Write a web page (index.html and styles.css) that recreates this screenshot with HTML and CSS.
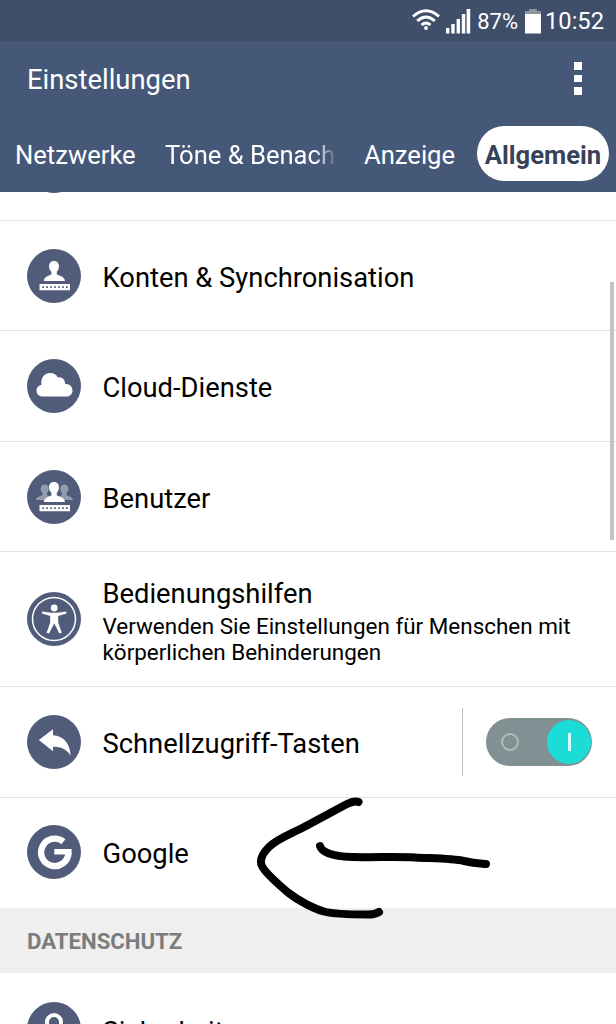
FILE: index.html
```html
<!DOCTYPE html>
<html lang="de">
<head>
  <meta charset="UTF-8" />
  <meta name="viewport" content="width=device-width, initial-scale=1.0" />
  <title>Einstellungen</title>
  <link rel="stylesheet" href="styles.css">
</head>
<body>
  <div class="status-bar">
    <svg class="wifi" viewBox="0 0 28 21" width="28" height="21">
      <g fill="none" stroke="#fff" stroke-width="3">
        <path d="M1 7.5Q14 -4 27 7.5" />
        <path d="M5.2 12Q14 4 22.8 12" />
        <path d="M9.5 16Q14 12 18.5 16" />
      </g>
      <circle cx="14" cy="19" r="1.9" fill="#fff" />
    </svg>
    <svg class="signal" viewBox="0 0 25 25" width="25" height="25">
      <path fill="#fff" d="M0 19h3.4v5.500h-3.400zM5.300 15h3.400v9.500h-3.400zM10.600 10h3.400v14.500h-3.400zM15.800 5h3.400v19.500h-3.400zM20.600 0h3.600v24.500h-3.600z" />
    </svg>
    <span class="percent">87%</span>
    <svg class="battery" viewBox="0 0 16 25" width="16" height="25">
      <path fill="#8d959f" d="M4 0h8v2h4v3H0V2h4z" />
      <path fill="#fff" d="M0 5h16v19.500H0z" />
    </svg>
    <span class="clock">10:52</span>
  </div>

  <div class="header">
    <div class="title-row">
      <h1>Einstellungen</h1>
      <div class="menu"><i></i><i></i><i></i></div>
    </div>
    <div class="tabs">
      <span class="tab tab-networks">Netzwerke</span>
      <span class="tab tab-sound">Töne &amp; Benach</span>
      <span class="tab tab-display">Anzeige</span>
      <span class="tab active">Allgemein</span>
    </div>
  </div>

  <div class="content">
    <div class="list">
      <div class="row upper">
        <div class="icon"></div>
      </div>
      <div class="row upper">
        <svg class="icon" viewBox="0 0 54 54">
          <path fill="#fff" d="M27 12c3.200 0 5 2.200 5 5.300 0 2.500-1 4.300-2.200 5.500v2.400c0 1 8 1.600 8.200 6.700H16.800c.2-5.100 7.600-5.700 7.600-6.700v-2.400c-1.300-1.200-2.400-3-2.400-5.500 0-3.100 1.800-5.300 5-5.300z" />
          <path fill="#fff" d="M12.500 35h30.500v6.200H12.500z" />
          <path stroke="#505c7a" stroke-width="1.700" stroke-dasharray="1.700 2.250" d="M15.300 38.200h26" />
        </svg>
        <span class="label">Konten &amp; Synchronisation</span>
      </div>
      <div class="row">
        <svg class="icon" viewBox="0 0 54 54">
          <path fill="#fff" d="M15.500 37.500c-3.400 0-6-2.500-6-5.800 0-3.200 2.300-5.300 5-5.700-1.200-6.500 2.800-12 8.500-12 4 0 6.500 1.800 7.800 4.400 4.200-1.200 7.400 2.200 7.400 6.600 4.200-.4 7.300 2.600 7.300 6.400 0 3.500-2.500 6.100-6 6.100z" />
        </svg>
        <span class="label">Cloud-Dienste</span>
      </div>
      <div class="row upper">
        <svg class="icon" viewBox="0 0 54 54">
          <g fill="#939bad">
            <path d="M17.700 14.500c2.500 0 4 1.700 4 4.300 0 2-.8 3.400-1.800 4.400v1.800c0 .8 6 1.500 6.300 5H9c.2-3.500 6.500-4.200 6.500-5v-1.800c-1-1-1.800-2.400-1.800-4.400 0-2.600 1.500-4.300 4-4.300z" />
            <path d="M37.300 14.500c2.500 0 4 1.700 4 4.300 0 2-.8 3.400-1.800 4.400v1.800c0 .8 6.300 1.500 6.500 5H28.600c.2-3.500 6.500-4.200 6.500-5v-1.800c-1-1-1.800-2.400-1.800-4.400 0-2.600 1.500-4.300 4-4.300z" />
          </g>
          <path fill="#fff" d="M27 12c3.200 0 5 2.200 5 5.300 0 2.500-1 4.300-2.200 5.500v2.400c0 1 8 1.600 8.200 6.700H16.800c.2-5.100 7.600-5.700 7.600-6.700v-2.400c-1.300-1.200-2.400-3-2.400-5.500 0-3.100 1.800-5.300 5-5.300z" />
          <path fill="#fff" d="M12.500 35h30.500v6.200H12.500z" />
          <path stroke="#505c7a" stroke-width="1.700" stroke-dasharray="1.700 2.250" d="M15.300 38.200h26" />
        </svg>
        <span class="label">Benutzer</span>
      </div>
      <div class="row tall">
        <svg class="icon" viewBox="0 0 54 54">
          <circle cx="27" cy="27" r="21.500" fill="none" stroke="#fff" stroke-width="1.500" />
          <circle cx="27.200" cy="16" r="3.400" fill="#fff" />
          <path fill="#fff" d="M15.300 19.600l8.700 1.200h6.500l8.700-1.200.3 1.900-8.300 2.500v6.500l3.600 10.200-2.400.9-5.200-10-5.200 10-2.400-.9 3.600-10.200V24l-8.200-2.500z" />
        </svg>
        <div class="text">
          <span class="label">Bedienungshilfen</span>
          <span class="summary">Verwenden Sie Einstellungen für Menschen mit<br>körperlichen Behinderungen</span>
        </div>
      </div>
      <div class="row">
        <svg class="icon" viewBox="0 0 54 54">
          <path fill="#fff" d="M11.800 25L26 14.300v5.900c10.500.8 17 8 17.600 20.200-4.200-6.200-9.200-8.700-17.600-8.700v4.500z" />
        </svg>
        <span class="label">Schnellzugriff-Tasten</span>
        <div class="switch-area">
          <div class="switch">
            <span class="off"></span>
            <span class="knob"></span>
          </div>
        </div>
      </div>
      <div class="row last">
        <svg class="icon" viewBox="0 0 54 54">
          <path fill="none" stroke="#fff" stroke-width="6.400" d="M36.400 16.700A13.700 13.700 0 1 0 41.500 28" />
          <path fill="#fff" d="M27.300 24h17.300v5.600H27.300z" />
        </svg>
        <span class="label">Google</span>
      </div>
      <div class="section">DATENSCHUTZ</div>
      <div class="row next">
        <svg class="icon" viewBox="0 0 54 54">
          <path fill="none" stroke="#fff" stroke-width="4" d="M20 26v-6a7 7 0 0 1 14 0v6" />
          <path fill="#fff" d="M16 25h22v16H16z" />
        </svg>
        <span class="label">Sicherheit</span>
      </div>
    </div>
    <div class="scrollbar"></div>
    <!-- hand drawn arrow pointing at the Google row -->
    <svg class="arrow" viewBox="0 0 270 145" width="270" height="145">
      <g fill="none" stroke="#000" stroke-width="8" stroke-linecap="round" stroke-linejoin="round">
        <path d="M118.500 17C115 15.500 111 17 106 19.500L66 41C49 50 38 53 29 62C22 69 19.500 76 22 81C25 88 38 99 48 107.500C60 117 75 124 84 126.500C95 129.500 115 129.500 128 129.500Q135 129.500 139 127" />
        <path d="M80 61C82 68 95 71.500 112 72C134 72.500 160 71.500 175 72.500C195 73.500 212 73.500 224 76C235 78.500 240 78.500 246 79" />
      </g>
    </svg>
  </div>
</body>
</html>
```
FILE: styles.css
```css
* {
  box-sizing: border-box;
}
body {
  margin: 0;
  height: 1024px;
  overflow: hidden;
  display: flex;
  flex-direction: column;
  font-family: Roboto, sans-serif;
  background-color: #fff;
  color: #000;
}
.status-bar {
  height: 41px;
  flex: none;
  display: flex;
  align-items: center;
  justify-content: flex-end;
  padding: 1px 12px 0 0;
  background-color: #3f4e69;
  color: #fff;
}
.wifi {
  margin-right: 6px;
  margin-top: -3px;
}
.signal {
  margin-right: 6px;
}
.percent {
  font-size: 22px;
  margin-right: 7px;
}
.battery {
  margin-right: 4px;
}
.clock {
  font-size: 23.700px;
}
.header {
  height: 151px;
  flex: none;
  background-color: #465877;
  color: #fff;
}
.title-row {
  height: 77px;
  display: flex;
  align-items: center;
  justify-content: space-between;
  padding: 0 34px 0 27px;
}
h1 {
  margin: 0;
  font-size: 27.400px;
  font-weight: 400;
}
.menu {
  display: flex;
  flex-direction: column;
  gap: 5px;
  margin-top: -2px;
}
.menu i {
  width: 8px;
  height: 7.5px;
  background-color: #fff;
}
.tabs {
  display: flex;
  align-items: center;
  padding: 8px 7px 0 15px;
  font-size: 25.600px;
  line-height: 32px;
  white-space: nowrap;
}
.tab {
  padding-top: 2px;
}
.tab-networks {
  width: 150px;
}
.tab-sound {
  width: 170px;
  margin-right: 29px;
  -webkit-mask-image: linear-gradient(to right, #000 150px, transparent 172px);
  mask-image: linear-gradient(to right, #000 150px, transparent 172px);
}
.tab-display {
  width: 113px;
}
.active {
  width: 132px;
  height: 55px;
  border-radius: 28px;
  line-height: 55px;
  text-align: center;
  background-color: #fff;
  color: #374258;
  font-weight: 700;
}
.content {
  flex: 1;
  position: relative;
  overflow: hidden;
}
/* list is scrolled, the first row is almost out of view */
.list {
  margin-top: -82px;
}
.row {
  height: 110.500px;
  display: flex;
  align-items: center;
  padding-left: 27px;
  border-bottom: 1px solid #e2e2e2;
}
.row.upper {
  padding-top: 2px;
}
.row.tall {
  height: 135px;
}
.row.last {
  border-bottom: none;
  padding-bottom: 2px;
}
.row.next {
  padding-top: 2px;
}
.icon {
  width: 54px;
  height: 54px;
  flex: none;
  margin-right: 21.500px;
  border-radius: 50%;
  background-color: #505c7a;
}
.label {
  font-size: 27.350px;
  line-height: 32px;
  padding-top: 5px;
}
.upper .label {
  padding-top: 3px;
}
.next .label {
  padding-top: 6px;
}
.text {
  display: flex;
  flex-direction: column;
}
.text .label {
  padding-top: 4px;
}
.summary {
  font-size: 22.450px;
  line-height: 26px;
  margin-top: 3px;
}
.switch-area {
  height: 68px;
  margin-left: auto;
  display: flex;
  align-items: center;
  padding: 0 24px 0 23px;
  border-left: 1px solid #bbb;
}
.switch {
  width: 106px;
  height: 48px;
  border-radius: 24px;
  display: flex;
  align-items: center;
  justify-content: space-between;
  padding: 0 1px 0 15px;
  background-color: #819193;
}
.off {
  width: 18px;
  height: 18px;
  border: 2.500px solid #b0bdbf;
  border-radius: 50%;
}
.knob {
  width: 44px;
  height: 44px;
  border-radius: 50%;
  display: flex;
  align-items: center;
  justify-content: center;
  background-color: #1bdcd6;
}
.knob::before {
  content: "";
  width: 3px;
  height: 18px;
  background-color: #d8ffff;
}
.section {
  height: 65px;
  padding-left: 27px;
  line-height: 67px;
  font-size: 22.200px;
  font-weight: 700;
  background-color: #efefef;
  color: #7c7c7c;
}
.scrollbar {
  position: absolute;
  top: 90px;
  right: 2px;
  width: 4px;
  height: 258px;
  background-color: #c4c4c4;
}
.arrow {
  position: absolute;
  top: 593px;
  left: 240px;
}
```
